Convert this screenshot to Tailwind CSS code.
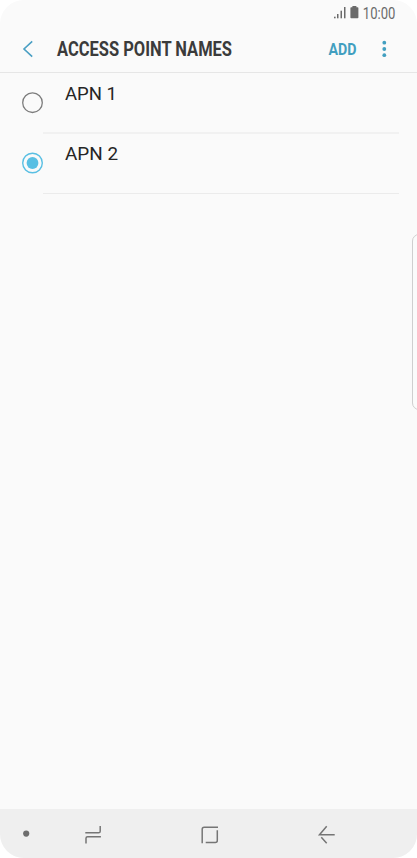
<!DOCTYPE html>
<html lang="en">
<head>
<meta charset="utf-8">
<title>Access Point Names</title>
<script src="https://cdn.jsdelivr.net/npm/@tailwindcss/browser@4"></script>
</head>
<body class="bg-white font-['Roboto',sans-serif]">
<div class="relative flex h-[858px] w-[417px] flex-col overflow-hidden rounded-[24px] bg-[#fafafa]">
  <header class="h-[73px] shrink-0 border-b border-[#e6e6e6]">
    <svg class="block" width="417" height="72" viewBox="0 0 417 72">
      <g fill="#6a6a6a">
        <rect x="334" y="16.7" width="1.6" height="1.6"/>
        <rect x="337" y="14" width="1.5" height="4.3"/>
        <rect x="340.5" y="10.7" width="1.5" height="7.6"/>
        <rect x="344" y="7" width="1.5" height="11.3"/>
        <path d="M352.4 6h4v1.3h1.2a.8.8 0 0 1 .8.8v9.4a.8.8 0 0 1-.8.8h-6.4a.8.8 0 0 1-.8-.8V8.1a.8.8 0 0 1 .8-.8h1.2z"/>
        <text x="362.8" y="18.6" font-size="15.8" textLength="32.5" lengthAdjust="spacingAndGlyphs">10:00</text>
      </g>
      <path d="M32.2 41.3 24 49l8.200 7.700" fill="none" stroke="#4a9fc3" stroke-width="1.6"/>
      <text x="57" y="56" font-size="19.600" font-weight="700" fill="#3b3b3b" textLength="175" lengthAdjust="spacingAndGlyphs">ACCESS POINT NAMES</text>
      <text x="328.5" y="55.3" font-size="16.300" font-weight="700" fill="#429fc0" textLength="28" lengthAdjust="spacingAndGlyphs">ADD</text>
      <g fill="#429fc0"><circle cx="384.3" cy="42.7" r="1.9"/><circle cx="384.3" cy="49" r="1.9"/><circle cx="384.3" cy="55.2" r="1.9"/></g>
    </svg>
  </header>
  <main class="flex-1 pl-[22px] pr-[18px]">
    <div class="flex h-[61px]">
      <svg class="mt-[19px] block h-[22px] w-[21px] shrink-0" viewBox="0 0 21 22"><circle cx="10.5" cy="10.7" r="9.8" fill="none" stroke="#7c7c7c" stroke-width="1.3"/></svg>
      <div class="flex-1 border-b-2 border-[#f1f1f1] pl-[22px]">
        <svg class="block" width="60" height="40"><text x="0" y="27.400" font-size="19.200" fill="#252525" textLength="52" lengthAdjust="spacingAndGlyphs">APN 1</text></svg>
      </div>
    </div>
    <div class="flex h-[60px]">
      <svg class="mt-[18px] block h-[22px] w-[21px] shrink-0" viewBox="0 0 21 22"><circle cx="10.5" cy="11" r="9.8" fill="none" stroke="#59bfe3" stroke-width="1.400"/><circle cx="10.5" cy="11" r="5.9" fill="#59bfe3"/></svg>
      <div class="flex-1 border-b border-[#ebebeb] pl-[22px]">
        <svg class="block" width="60" height="40"><text x="0" y="26.300" font-size="19.200" fill="#252525" textLength="53" lengthAdjust="spacingAndGlyphs">APN 2</text></svg>
      </div>
    </div>
  </main>
  <nav class="h-[49px] shrink-0 bg-[#efefef]">
    <svg class="block" width="417" height="49" viewBox="0 809 417 49" fill="none" stroke="#757575" stroke-width="1.500">
      <circle cx="26.2" cy="833.6" r="3.1" fill="#6e6e6e" stroke="none"/>
      <path d="M85.3 832.8H98.6q1.600 0 1.600-1.600V826M100.9 836.7H87.6q-1.600 0-1.600 1.600V843.5"/>
      <path d="M202.2 843.2V829.2q0-2 2-2H218M217.3 830.2V840.5q0 2-2 2H205.7"/>
      <path d="M334.7 834.7H319.5L326.7 826.3M321.3 837.3 326.7 843.3"/>
    </svg>
  </nav>
  <div class="absolute left-[412px] top-[234px] h-[176px] w-[14px] rounded-[7px] border border-[#cfcfcf] bg-[#fbfbfb]"></div>
</div>
</body>
</html>
